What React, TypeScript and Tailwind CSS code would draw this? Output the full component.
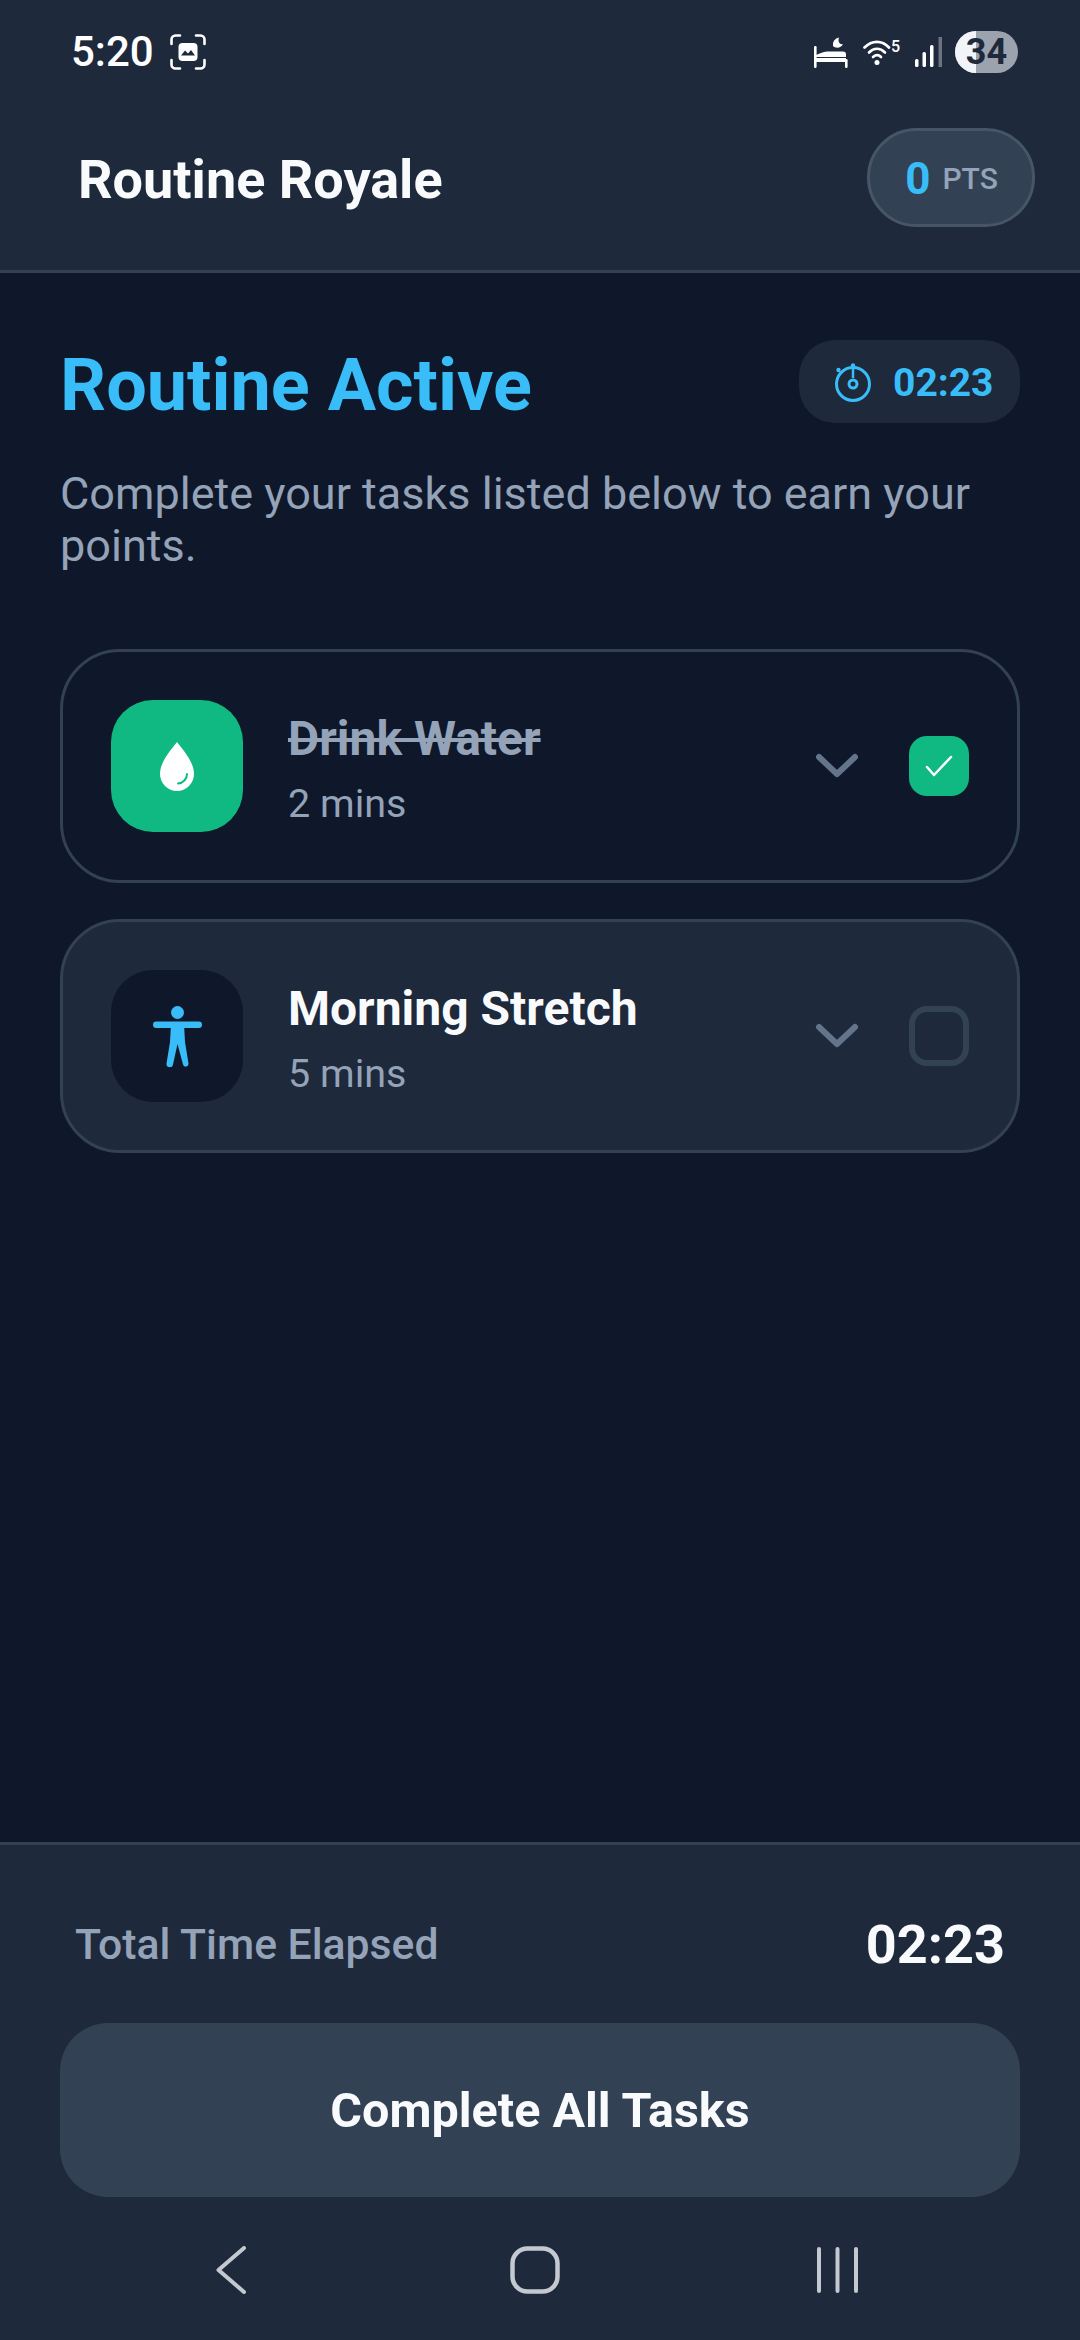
import React from "react";

function ScreenshotIcon() {
  return (
    <svg width="36" height="36" viewBox="0 0 36 36" fill="none">
      <path d="M1.5 10V5.5a4 4 0 0 1 4-4H10M26 1.5h4.5a4 4 0 0 1 4 4V10M34.500 26v4.500a4 4 0 0 1-4 4H26M10 34.500H5.500a4 4 0 0 1-4-4V26" stroke="#fff" strokeWidth="2.6" strokeLinecap="round" />
      <rect x="8.500" y="9" width="19" height="18" rx="4" fill="#fff" />
      <path d="M11 21.500l4-5 3 3 3-3.500 4 5.500z" fill="#1e293b" />
    </svg>
  );
}

function BedIcon() {
  return (
    <svg width="34" height="31" viewBox="0 0 34 31" fill="#fff">
      <path d="M25 0.500a7 7 0 0 0-6 8.500c2.500 2.500 8 2.500 10-2-3 1-5.500-2-4-6.500z" />
      <rect x="0" y="9" width="2.600" height="22" rx="1.200" />
      <rect x="31" y="22" width="2.600" height="9" rx="1.200" />
      <path d="M2 20h30v-2.500c0-2-1-3-3-3H13c-2 0-4 0.500-6 1.500L2 18z" />
      <rect x="2" y="21" width="30" height="4" />
    </svg>
  );
}

function WifiIcon() {
  return (
    <svg width="28" height="28" viewBox="0 0 28 28" fill="none">
      <path d="M1.500 9.500C9 2 19 2 26 9.500" stroke="#fff" strokeWidth="2.700" strokeLinecap="round" />
      <path d="M6 14.500c5-5 11-5 16 0" stroke="#fff" strokeWidth="2.700" strokeLinecap="round" />
      <path d="M10 19c3-2.500 5.500-2.500 8 0" stroke="#fff" strokeWidth="2.700" strokeLinecap="round" />
      <circle cx="14" cy="24.500" r="2.500" fill="#fff" />
    </svg>
  );
}

function SignalIcon() {
  return (
    <svg width="28" height="30" viewBox="0 0 28 30" fill="#fff">
      <rect x="0" y="22" width="3.500" height="8" rx="1.500" />
      <rect x="7.500" y="15" width="3.500" height="15" rx="1.500" />
      <rect x="15" y="8" width="3.500" height="22" rx="1.500" />
      <rect x="23.500" y="0" width="3.500" height="30" fill="#6b7280" />
    </svg>
  );
}

function StopwatchIcon() {
  return (
    <svg width="40" height="40" viewBox="0 0 40 40" fill="none" stroke="#38bdf8">
      <circle cx="20" cy="22" r="16.500" strokeWidth="3" />
      <path d="M20 6V16" strokeWidth="2.500" />
      <circle cx="20" cy="22" r="4" strokeWidth="3" />
      <circle cx="20" cy="3.500" r="2.200" fill="#38bdf8" stroke="none" />
      <circle cx="5.500" cy="8" r="2.200" fill="#38bdf8" stroke="none" />
    </svg>
  );
}

function DropIcon() {
  return (
    <svg width="34" height="49" viewBox="0 0 34 49" fill="none">
      <path d="M17 0C22 7 34 19 34 32A17 17 0 0 1 0 32C0 19 12 7 17 0Z" fill="#fff" />
      <path d="M27 32C27 37 23 41 18 41.500" stroke="#10b981" strokeWidth="2" strokeLinecap="round" />
    </svg>
  );
}

function PersonIcon() {
  return (
    <svg width="49" height="61" viewBox="0 0 49 61" fill="#38bdf8">
      <circle cx="24.500" cy="6.500" r="6.500" />
      <rect x="0" y="15.500" width="49" height="6.500" rx="3.250" />
      <path d="M18 18H31L32 36L35.500 57.500A2.800 2.800 0 0 1 30 58.500L24.500 38L20 58.500A2.800 2.800 0 0 1 13.500 57.500L17 36Z" />
    </svg>
  );
}

function Chevron() {
  return (
    <svg width="44" height="26" viewBox="0 0 44 26" fill="none">
      <path d="M4 4L22 21L40 4" stroke="#64748b" strokeWidth="6" strokeLinecap="round" strokeLinejoin="round" />
    </svg>
  );
}

function Card(props: {
  icon: React.ReactNode;
  iconBg: string;
  title: React.ReactNode;
  mins: string;
  cardBg: string;
  box: React.ReactNode;
}) {
  return (
    <div className={"flex items-center h-[234px] pl-[48px] pr-[48px] border-[3px] border-[#334155] rounded-[60px] " + props.cardBg}>
      <div className={"flex items-center justify-center w-[132px] h-[132px] rounded-[42px] " + props.iconBg}>{props.icon}</div>
      <div className="flex flex-col flex-1 ml-[45px] pt-[6px]">
        {props.title}
        <div className="text-[39.500px] leading-[46px] mt-[14px] text-[#94a3b8]">{props.mins}</div>
      </div>
      <div className="flex items-center justify-center w-[44px] mr-[50px]"><Chevron /></div>
      {props.box}
    </div>
  );
}

export default function App() {
  return (
    <div className="flex flex-col w-[1080px] h-[2340px] bg-[#0f172a] font-['Roboto',sans-serif] text-white overflow-hidden">
      <header className="flex flex-col h-[273px] bg-[#1e293b] border-b-[3px] border-[#334155]">
        <div className="flex items-center h-[104px] pl-[71px] pr-[62px]">
          <span className="text-[42px] leading-none font-medium">5:20</span>
          <span className="ml-[16px] flex"><ScreenshotIcon /></span>
          <div className="flex-1" />
          <span className="flex"><BedIcon /></span>
          <span className="flex ml-[15px]"><WifiIcon /></span>
          <span className="w-[12px] h-[28px] text-[16px] leading-[18px] font-medium text-white">5</span>
          <span className="flex ml-[12px]"><SignalIcon /></span>
          <div className="relative flex items-center justify-center ml-[12px] w-[63px] h-[42px] rounded-full overflow-hidden bg-[#9ca3af]">
            <div className="absolute left-0 top-0 bottom-0 w-[21px] bg-[#f1f5f9]" />
            <span className="relative text-[36px] leading-none font-bold text-[#1e293b]">34</span>
          </div>
        </div>
        <div className="flex items-start justify-between pl-[78px] pr-[45px]">
          <span className="text-[54px] leading-[147px] pt-[2px] font-bold text-[#f8fafc] h-[147px]">Routine Royale</span>
          <div className="flex items-center justify-center w-[168px] h-[99px] mt-[24px] pt-[3px] pl-[1px] rounded-full bg-[#334155] border-[3px] border-[#475569]">
            <span className="text-[44px] leading-[50px] font-bold text-[#38bdf8]">0</span>
            <span className="ml-[12px] text-[30px] leading-[50px] font-medium text-[#94a3b8]">PTS</span>
          </div>
        </div>
      </header>

      <main className="flex flex-col flex-1 px-[60px] pt-[67px]">
        <div className="flex items-center justify-between">
          <h1 className="text-[72px] leading-[83px] pt-[4px] h-[83px] font-bold text-[#38bdf8]">Routine Active</h1>
          <div className="flex items-center h-[83px] w-[221px] pl-[34px] rounded-[36px] bg-[#1e293b]">
            <StopwatchIcon />
            <span className="ml-[20px] pt-[3px] text-[39px] font-bold text-[#38bdf8]">02:23</span>
          </div>
        </div>
        <p className="mt-[45px] text-[45px] leading-[52px] text-[#94a3b8]">Complete your tasks listed below to earn your points.</p>
        <div className="flex flex-col gap-[36px] mt-[77px]">
          <Card
            cardBg="bg-[#0f172a]"
            iconBg="bg-[#10b981]"
            icon={<DropIcon />}
            title={<div className="text-[48px] leading-[56px] font-bold text-[#94a3b8] line-through">Drink Water</div>}
            mins="2 mins"
            box={
              <div className="flex items-center justify-center w-[60px] h-[60px] rounded-[18px] bg-[#10b981]">
                <svg width="28" height="22" viewBox="0 0 28 22" fill="none">
                  <path d="M2 12L9 20L26 2" stroke="#fff" strokeWidth="2.500" strokeLinecap="round" strokeLinejoin="round" />
                </svg>
              </div>
            }
          />
          <Card
            cardBg="bg-[#1e293b]"
            iconBg="bg-[#0f172a]"
            icon={<PersonIcon />}
            title={<div className="text-[48px] leading-[56px] font-bold text-[#f8fafc]">Morning Stretch</div>}
            mins="5 mins"
            box={<div className="w-[60px] h-[60px] rounded-[18px] border-[6px] border-[#334155]" />}
          />
        </div>
      </main>

      <footer className="flex flex-col bg-[#1e293b] border-t-[3px] border-[#334155]">
        <div className="flex items-center justify-between h-[60px] mt-[69px] pl-[75px] pr-[75px]">
          <span className="text-[42.700px] font-medium text-[#94a3b8]">Total Time Elapsed</span>
          <span className="text-[54px] font-bold text-[#f8fafc]">02:23</span>
        </div>
        <div className="flex items-center justify-center h-[174px] pt-[2px] mt-[49px] mx-[60px] rounded-[48px] bg-[#334155] text-[48.500px] font-bold text-[#f8fafc]">Complete All Tasks</div>
        <div className="flex items-start h-[143px] pt-[49px] pl-[216px]">
          <svg width="32" height="48" viewBox="0 0 32 48" fill="none">
            <path d="M28 2L2.500 24L28 46" stroke="#c4c8d0" strokeWidth="4" strokeLinecap="round" strokeLinejoin="round" />
          </svg>
          <svg className="ml-[262px]" width="50" height="48" viewBox="0 0 50 48" fill="none">
            <rect x="2.500" y="2.500" width="45" height="43" rx="15" stroke="#c4c8d0" strokeWidth="4.500" />
          </svg>
          <svg className="ml-[256px]" width="44" height="48" viewBox="0 0 44 48" fill="none" stroke="#c4c8d0" strokeWidth="4" strokeLinecap="round">
            <path d="M3 3V45M21.500 3V45M40 3V45" />
          </svg>
        </div>
      </footer>
    </div>
  );
}
